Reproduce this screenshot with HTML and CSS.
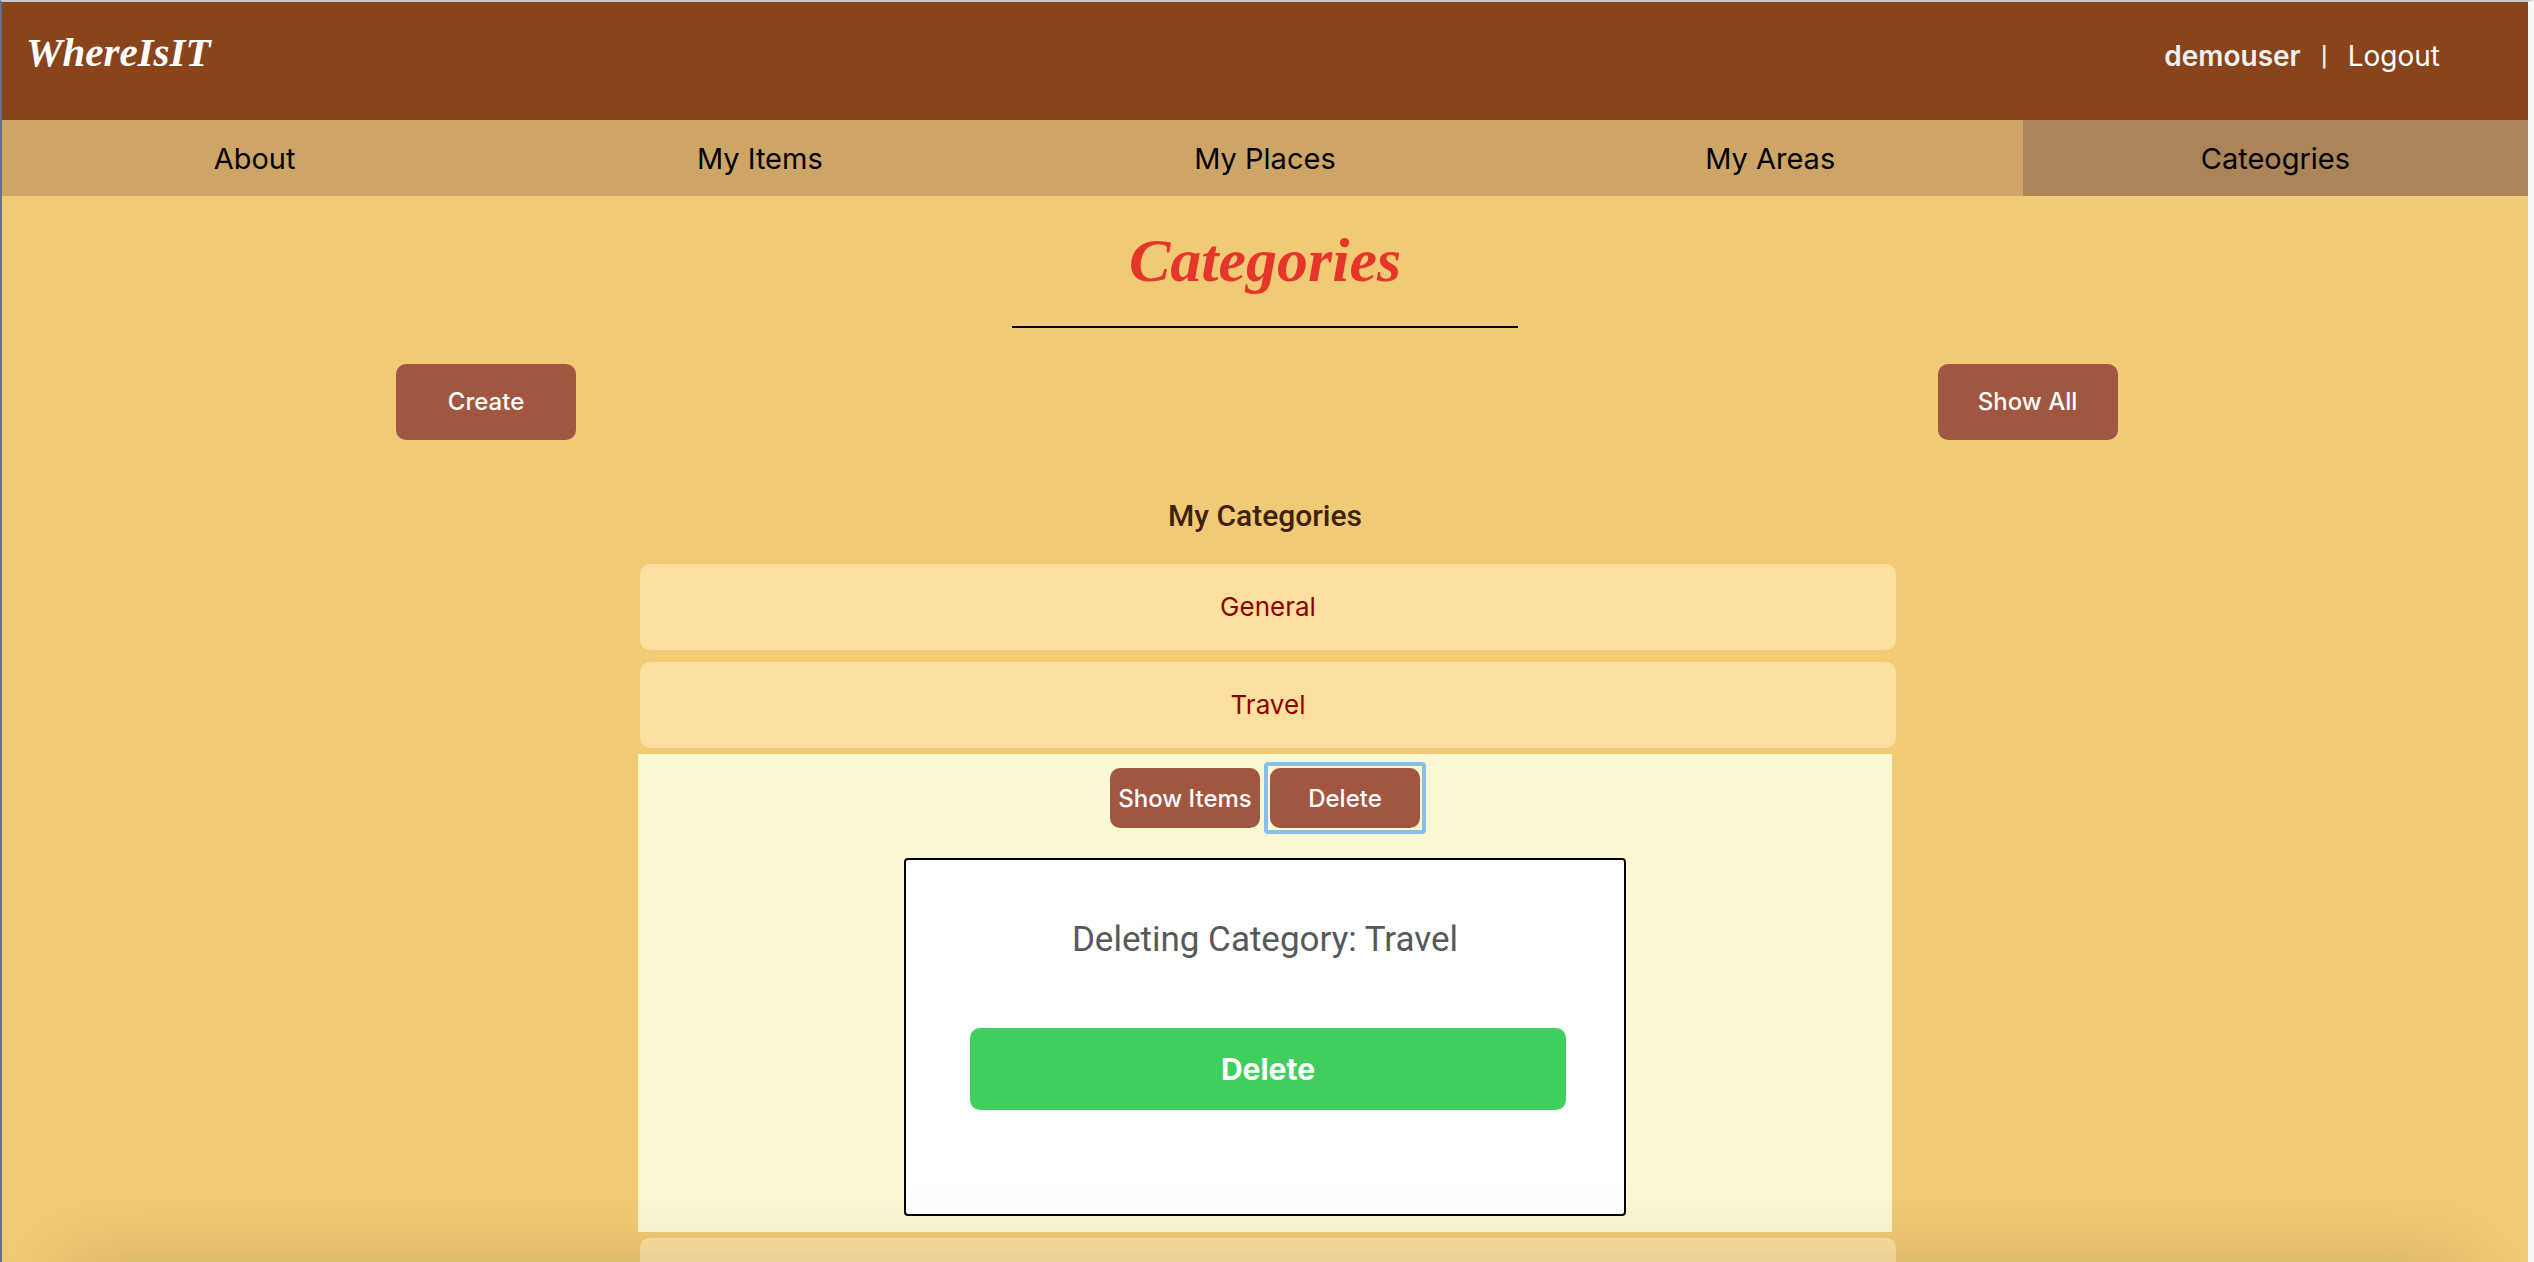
FILE: index.html
```html
<!DOCTYPE html>
<html lang="en">
<head>
<meta charset="utf-8">
<title>WhereIsIT</title>
<link rel="stylesheet" href="styles.css">
</head>
<body>
<div class="app">
  <header class="header">
    <a class="logo" href="#">WhereIsIT</a>
    <div class="account"><strong>demouser</strong><span class="divider">|</span><a href="#">Logout</a></div>
  </header>
  <nav class="nav">
    <a href="#">About</a>
    <a href="#">My Items</a>
    <a href="#">My Places</a>
    <a href="#">My Areas</a>
    <a class="active" href="#">Cateogries</a>
  </nav>
  <main>
    <h1 class="title">Categories</h1>
    <hr class="rule">
    <div class="actions">
      <button class="btn large" type="button">Create</button>
      <button class="btn large" type="button">Show All</button>
    </div>
    <h2 class="subtitle">My Categories</h2>
    <div class="list">
      <button class="row" type="button">General</button>
      <button class="row" type="button">Travel</button>
      <section class="panel">
        <div class="panel-actions">
          <button class="btn" type="button">Show Items</button>
          <button class="btn focused" type="button">Delete</button>
        </div>
        <div class="confirm">
          <h3>Deleting Category: Travel</h3>
          <button class="confirm-btn" type="button">Delete</button>
        </div>
      </section>
      <button class="row" type="button" aria-label="Category"></button>
    </div>
  </main>
  <div class="shade"></div>
</div>
</body>
</html>
```
FILE: styles.css
```css
* { box-sizing: border-box; }
html { height: 100%; overflow: hidden; background: #f7f5f5; }
body {
  margin: 0;
  height: 100%;
  overflow: hidden;
  border-top: 2px solid #c9c9c9;
  border-left: 2px solid #66708a;
  border-right: 6px solid #f7f5f5;
  font-family: Inter, "Liberation Sans", sans-serif;
}
button { border: 0; font-family: inherit; cursor: pointer; }
a { color: inherit; text-decoration: none; }
.app { position: relative; height: 100%; overflow: hidden; background: #f0ca75; }

.header {
  display: flex;
  justify-content: space-between;
  padding: 24px 88px 34px 24px;
  background: #89441c;
  color: #fff;
}
.logo {
  font: italic bold 41px/52px "Apple Chancery", "Liberation Serif", serif;
}
.account { display: flex; align-items: center; gap: 20px; font-size: 28px; line-height: 60px; }
.account strong { font-weight: 600; color: #f0f0f0; }
.divider { color: #f0f0f0; font: 500 28px/60px Roboto, sans-serif; }

.nav { display: grid; grid-template-columns: repeat(5, 1fr); background: #cda567; }
.nav a { padding-top: 2px; color: #000; font-size: 29px; line-height: 74px; text-align: center; }
.nav .active { background: #ab8459; }

.title {
  margin: 24px 0 0;
  color: #e7352c;
  font: italic bold 62px/80px "Apple Chancery", "Liberation Serif", serif;
  text-align: center;
}
.rule { width: 20%; margin: 26px auto 36px; border: 0; border-top: 2px solid #000; }
.actions { display: flex; justify-content: space-between; padding: 0 16.25% 0 15.6%; }
.btn {
  width: 150px;
  height: 60px;
  padding: 0;
  border-radius: 10px;
  background: #a15641;
  color: #fff;
  font-size: 24px;
  font-weight: 500;
}
.large { width: 180px; height: 76px; padding-bottom: 2px; }
.subtitle {
  margin: 56px 0 28px;
  color: #40220c;
  font: 500 30px/40px Roboto, sans-serif;
  text-align: center;
}
.list { width: calc(50% - 9px); margin: 0 auto; }
.row {
  display: block;
  width: calc(100% + 2px);
  height: 86px;
  margin: 0 0 12px 2px;
  padding-bottom: 2px;
  border-radius: 10px;
  background: #fddf9f;
  color: #900000;
  font-size: 26px;
}
.panel { margin: -6px 0 6px; padding: 14px 0 16px; background: #fbf7d3; }
.panel-actions { display: flex; justify-content: center; gap: 10px; }
.focused { position: relative; }
.focused::after {
  content: "";
  position: absolute;
  inset: -6px;
  border: 4px solid #87bfec;
  border-radius: 4px;
}
.confirm {
  max-width: 722px;
  margin: 30px auto 0;
  padding: 56px 58px 104px;
  border: 2px solid #000;
  border-radius: 4px;
  background: #fff;
  text-align: center;
}
.confirm h3 { margin: 0 0 64px; color: #555958; font: 400 35px/48px Roboto, sans-serif; }
.confirm-btn {
  width: calc(100% - 6px);
  height: 82px;
  margin-left: 6px;
  border-radius: 10px;
  background: #40ce5f;
  color: #fff;
  font-size: 30px;
  font-weight: 700;
}
/* soft shadow rising from the bottom edge, fading at both corners */
.shade {
  position: absolute;
  inset: auto 60px -200px;
  height: 200px;
  box-shadow: 0 0 80px rgba(0, 0, 0, 0.14);
  pointer-events: none;
}
```
